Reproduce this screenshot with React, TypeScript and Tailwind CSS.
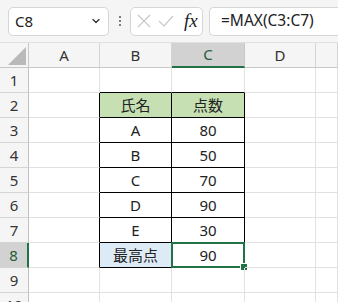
import { ChevronDown } from 'lucide-react';

const cols = ['A', 'B', 'C', 'D', ''];

const table: Record<number, [string, string]> = {
  2: ['氏名', '点数'],
  3: ['A', '80'],
  4: ['B', '50'],
  5: ['C', '70'],
  6: ['D', '90'],
  7: ['E', '30'],
  8: ['最高点', '90'],
};

const font = { fontFamily: '"Noto Sans", "Noto Sans CJK JP", sans-serif' };

function Toolbar() {
  return (
    <div className="h-[43px] flex items-center bg-[#f5f5f5] pl-[8px] border-b border-[#e1e1e1]">
      <div className="w-[101px] h-[29px] bg-white border border-[#d6d6d6] rounded-[5px] flex items-center justify-between pl-[6px] pr-[6px] text-[15px] text-[#222]">
        <span>C8</span>
        <ChevronDown className="w-[12px] h-[12px] text-[#333]" strokeWidth={2.6} />
      </div>
      <div className="w-[21px] flex flex-col items-center gap-[2px]">
        <span className="w-[2px] h-[2px] bg-[#555] rounded-full" />
        <span className="w-[2px] h-[2px] bg-[#555] rounded-full" />
        <span className="w-[2px] h-[2px] bg-[#555] rounded-full" />
      </div>
      <div className="w-[73px] h-[29px] bg-white border border-[#d6d6d6] rounded-[5px] flex items-center pl-[6px] gap-[7px]">
        <svg width="14" height="14" viewBox="0 0 14 14" className="text-[#c8c8c8]">
          <path d="M1 1 L13 13 M13 1 L1 13" stroke="currentColor" strokeWidth="1.2" fill="none" />
        </svg>
        <svg width="16" height="12" viewBox="0 0 16 12" className="text-[#c8c8c8]">
          <path d="M1 6 L6 11 L15 1" stroke="currentColor" strokeWidth="1.2" fill="none" />
        </svg>
        <span
          className="text-[19px] leading-none italic text-[#222] ml-[3px] -mt-[2px]"
          style={{ fontFamily: '"Liberation Serif", serif' }}
        >
          fx
        </span>
      </div>
      <div className="ml-[6px] flex-1 h-[29px] bg-white border border-[#d6d6d6] border-r-0 rounded-l-[5px] flex items-center pl-[11px] text-[15.5px] text-[#222]">
        =MAX(C3:C7)
      </div>
    </div>
  );
}

function Cell({ row, col }: { row: number; col: number }) {
  const inTable = row >= 2 && row <= 8 && (col === 1 || col === 2);
  const val = inTable ? table[row][col - 1] : '';
  let cls = 'relative flex items-center justify-center text-[15px] text-[#222] border-r border-b ';
  if (inTable) {
    cls += 'border-black ';
    if (row === 2) cls += 'bg-[#c6e0b4] ';
    if (row === 8 && col === 1) cls += 'bg-[#ddebf7] ';
  } else if (col === 0 && row >= 2 && row <= 8) {
    cls += 'border-r-black border-b-[#e1e1e1] ';
  } else if ((col === 1 || col === 2) && row === 1) {
    cls += 'border-b-black border-r-[#e1e1e1] ';
  } else {
    cls += 'border-[#e1e1e1] ';
  }
  const selected = row === 8 && col === 2;
  return (
    <div className={cls}>
      {val}
      {selected && (
        <div className="absolute -left-[1px] -top-[1px] -right-[1px] -bottom-[1px] border-2 border-[#217346]">
          <div className="absolute -right-[4px] -bottom-[4px] w-[6px] h-[6px] bg-[#217346] outline outline-1 outline-white" />
        </div>
      )}
    </div>
  );
}

export default function App() {
  const rows = [1, 2, 3, 4, 5, 6, 7, 8, 9, 10];
  return (
    <div className="w-[338px] h-[302px] overflow-hidden bg-white" style={font}>
      <Toolbar />
      <div className="grid grid-cols-[29px_71px_72px_73px_71px_1fr] auto-rows-[25px]">
        <div className="relative bg-[#f5f5f5] border-r border-b border-[#c8c8c8]">
          <svg width="19" height="19" viewBox="0 0 19 19" className="absolute left-[8px] top-[4px]">
            <path d="M18 0 L18 18 L0 18 Z" fill="#b9b9b9" />
          </svg>
        </div>
        {cols.map((c) =>
          c === 'C' ? (
            <div
              key={c}
              className="flex items-center justify-center bg-[#d2d2d2] border-r border-[#c8c8c8] border-b-2 border-b-[#217346] text-[15px] text-[#1f5c3c]"
            >
              {c}
            </div>
          ) : (
            <div
              key={c || 'e'}
              className="flex items-center justify-center bg-[#f5f5f5] border-r border-b border-[#d4d4d4] border-b-[#c8c8c8] text-[15px] text-[#333]"
            >
              {c}
            </div>
          )
        )}
        {rows.map((r) => (
          <div key={r} className="contents">
            {r === 8 ? (
              <div className="flex items-center justify-center bg-[#d2d2d2] border-r-2 border-r-[#217346] border-b border-b-[#d4d4d4] text-[15px] text-[#1f5c3c]">
                {r}
              </div>
            ) : (
              <div className="flex items-center justify-center bg-[#f5f5f5] border-r border-b border-[#d4d4d4] border-r-[#c0c0c0] text-[15px] text-[#333]">
                {r}
              </div>
            )}
            {[0, 1, 2, 3, 4].map((c) => (
              <Cell key={c} row={r} col={c} />
            ))}
          </div>
        ))}
      </div>
    </div>
  );
}
